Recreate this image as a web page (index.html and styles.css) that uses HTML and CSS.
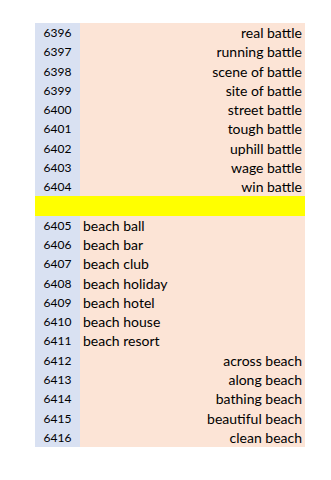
FILE: index.html
```html
<!DOCTYPE html>
<html>
<head>
<meta charset="utf-8">
<link rel="stylesheet" href="styles.css">
</head>
<body>
<div class="sheet">
  <div class="num">6396</div><div class="txt right">real battle</div>
  <div class="num">6397</div><div class="txt right">running battle</div>
  <div class="num">6398</div><div class="txt right">scene of battle</div>
  <div class="num">6399</div><div class="txt right">site of battle</div>
  <div class="num">6400</div><div class="txt right">street battle</div>
  <div class="num">6401</div><div class="txt right">tough battle</div>
  <div class="num">6402</div><div class="txt right">uphill battle</div>
  <div class="num">6403</div><div class="txt right">wage battle</div>
  <div class="num">6404</div><div class="txt right">win battle</div>
  <div class="sep"></div>
  <div class="num">6405</div><div class="txt">beach ball</div>
  <div class="num">6406</div><div class="txt">beach bar</div>
  <div class="num">6407</div><div class="txt">beach club</div>
  <div class="num">6408</div><div class="txt">beach holiday</div>
  <div class="num">6409</div><div class="txt">beach hotel</div>
  <div class="num">6410</div><div class="txt">beach house</div>
  <div class="num">6411</div><div class="txt">beach resort</div>
  <div class="num">6412</div><div class="txt right">across beach</div>
  <div class="num">6413</div><div class="txt right">along beach</div>
  <div class="num">6414</div><div class="txt right">bathing beach</div>
  <div class="num">6415</div><div class="txt right">beautiful beach</div>
  <div class="num">6416</div><div class="txt right">clean beach</div>
</div>
</body>
</html>
```
FILE: styles.css
```css
html, body {
  margin: 0;
  padding: 0;
  background: #ffffff;
}
body {
  padding: 23px 0 0 35px;
  font-family: Lato, "Open Sans", "Liberation Sans", sans-serif;
  color: #000;
}
.sheet {
  display: grid;
  grid-template-columns: 45px 225px;
  grid-template-rows: repeat(22, 1fr);
  height: 424px;
  width: 270px;
}
.num {
  background: #d9e1f2;
  font-size: 12px;
  display: flex;
  align-items: center;
  justify-content: center;
}
.txt {
  background: #fce4d6;
  font-size: 14px;
  display: flex;
  align-items: center;
  padding: 0 3px;
}
.txt.right {
  justify-content: flex-end;
}
.sep {
  grid-column: 1 / 3;
  background: #ffff00;
}
```
